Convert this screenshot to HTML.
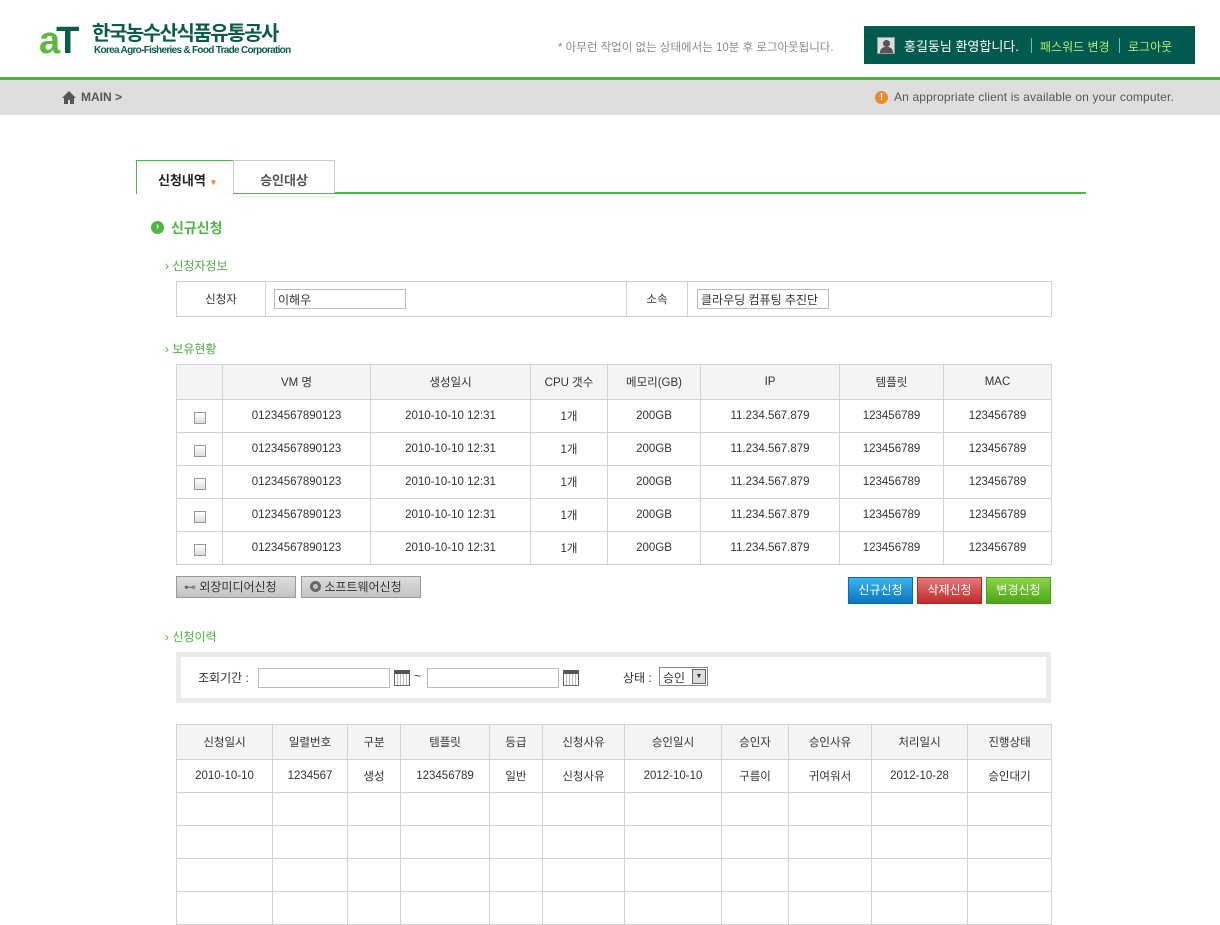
<!DOCTYPE html>
<html><head><meta charset="utf-8"><style>
*{margin:0;padding:0;box-sizing:border-box}
body{width:1220px;height:903px;overflow:hidden;background:#fff;font-family:"Liberation Sans","Noto Sans CJK KR","NanumGothic",sans-serif;font-size:12px;color:#333;position:relative}
.a{position:absolute}
table{border-collapse:collapse;table-layout:fixed;position:absolute}
td,th{border:1px solid #d2d2d2;text-align:center;font-weight:normal;font-size:11.5px;color:#333;padding:0}
th{background:#f4f4f4}
.cb{display:inline-block;width:12px;height:12px;border:1px solid #999;background:linear-gradient(#fff,#ddd);vertical-align:-6px}
.inp{position:absolute;border:1px solid #bbb;background:#fff;height:20px;font-size:12px;padding:1px 3px}
.sub{position:absolute;color:#4dae3f;font-size:12px}
.btn{position:absolute;height:27px;color:#fff;font-size:12px;text-align:center;line-height:25px}
.gb{position:absolute;height:22px;background:linear-gradient(#ddd,#c4c4c4);border:1px solid #999;font-size:12px;line-height:20px;color:#333}
.cal{position:absolute;width:16px;height:16px;border:1px solid #666;background:repeating-linear-gradient(90deg,#fff 0 2px,#bbb 2px 3px);border-top:4px solid #555}
</style></head><body>
<div class="a" style="left:39px;top:22px;font:bold 38px 'Liberation Sans',sans-serif;letter-spacing:-4px;line-height:38px"><span style="color:#5bb83f">a</span><span style="color:#0d5c4a">T</span></div>
<div class="a" style="left:92px;top:22px;font-weight:bold;font-size:20px;color:#0d5c4a;letter-spacing:-1.5px;line-height:24px">한국농수산식품유통공사</div>
<div class="a" style="left:94px;top:45px;font-weight:bold;font-size:10px;color:#0d5c4a;letter-spacing:-0.7px">Korea Agro-Fisheries &amp; Food Trade Corporation</div>
<div class="a" style="left:558px;top:39px;font-size:11.5px;color:#888">* 아무런 작업이 없는 상태에서는 10분 후 로그아웃됩니다.</div>
<div class="a" style="left:864px;top:26px;width:331px;height:38px;background:#02594e"></div>
<div class="a" style="left:877px;top:37px;width:18px;height:17px;background:#ddd;border:1px solid #999"><div class="a" style="left:5px;top:2px;width:7px;height:7px;border-radius:50%;background:#555"></div><div class="a" style="left:2px;top:9px;width:13px;height:6px;border-radius:5px 5px 0 0;background:#555"></div></div>
<div class="a" style="left:904px;top:36px;color:#fff;font-size:13px">홍길동님 환영합니다.</div>
<div class="a" style="left:1031px;top:38px;width:1px;height:15px;background:#6c9"></div>
<div class="a" style="left:1040px;top:38px;color:#aef07a;font-size:12px">패스워드 변경</div>
<div class="a" style="left:1119px;top:38px;width:1px;height:15px;background:#6c9"></div>
<div class="a" style="left:1128px;top:38px;color:#aef07a;font-size:12px">로그아웃</div>
<div class="a" style="left:0;top:77px;width:1220px;height:3px;background:#4cb843"></div>
<div class="a" style="left:0;top:80px;width:1220px;height:35px;background:#dedede"></div>
<svg class="a" style="left:62px;top:91px" width="14" height="13"><path d="M7 0L0 7h2v6h4V9h2v4h4V7h2z" fill="#555"/></svg>
<div class="a" style="left:81px;top:90px;font-weight:bold;font-size:12px;color:#555">MAIN &gt;</div>
<div class="a" style="left:875px;top:91px;width:13px;height:13px;border-radius:50%;background:#ef8a2a;color:#fff;font-size:10px;font-weight:bold;text-align:center;line-height:13px">!</div>
<div class="a" style="left:894px;top:90px;font-size:12px;color:#555;letter-spacing:0.15px">An appropriate client is available on your computer.</div>

<div class="a" style="left:136px;top:192px;width:950px;height:2px;background:#4cb843"></div>
<div class="a" style="left:136px;top:160px;width:98px;height:34px;border:1px solid #4cb843;border-bottom:none;background:#fff;font-weight:bold;font-size:13px;color:#222;padding:9px 0 0 21px">신청내역 <span style="color:#f07820;font-size:8px">▼</span></div>
<div class="a" style="left:233px;top:160px;width:102px;height:33px;border:1px solid #ccc;border-bottom:none;background:#fff;font-weight:bold;font-size:13px;color:#555;text-align:center;padding-top:9px">승인대상</div>

<div class="a" style="left:151px;top:221px;width:13px;height:13px;border-radius:50%;background:#4cb843;color:#fff;font-size:10px;text-align:center;line-height:12px;font-weight:bold">›</div>
<div class="a" style="left:171px;top:218px;font-weight:bold;font-size:14px;color:#4cb843">신규신청</div>

<div class="sub" style="left:165px;top:257px">› 신청자정보</div>
<table style="left:176px;top:281px;width:875px;height:36px"><colgroup><col width="89"><col width="361"><col width="61"><col width="364"></colgroup>
<tr><td>신청자</td><td></td><td>소속</td><td></td></tr></table>
<div class="inp" style="left:274px;top:289px;width:132px">이해우</div>
<div class="inp" style="left:697px;top:289px;width:132px">클라우딩 컴퓨팅 추진단</div>

<div class="sub" style="left:165px;top:340px">› 보유현황</div>
<table style="left:176px;top:364px;width:875px"><colgroup><col width="46"><col width="148"><col width="160"><col width="77"><col width="93"><col width="139"><col width="104"><col width="108"></colgroup>
<tr style="height:35px"><th></th><th>VM 명</th><th>생성일시</th><th>CPU 갯수</th><th>메모리(GB)</th><th>IP</th><th>템플릿</th><th>MAC</th></tr>
<tr style="height:33px"><td><span class="cb"></span></td><td>01234567890123</td><td>2010-10-10 12:31</td><td>1개</td><td>200GB</td><td>11.234.567.879</td><td>123456789</td><td>123456789</td></tr>
<tr style="height:33px"><td><span class="cb"></span></td><td>01234567890123</td><td>2010-10-10 12:31</td><td>1개</td><td>200GB</td><td>11.234.567.879</td><td>123456789</td><td>123456789</td></tr>
<tr style="height:33px"><td><span class="cb"></span></td><td>01234567890123</td><td>2010-10-10 12:31</td><td>1개</td><td>200GB</td><td>11.234.567.879</td><td>123456789</td><td>123456789</td></tr>
<tr style="height:33px"><td><span class="cb"></span></td><td>01234567890123</td><td>2010-10-10 12:31</td><td>1개</td><td>200GB</td><td>11.234.567.879</td><td>123456789</td><td>123456789</td></tr>
<tr style="height:33px"><td><span class="cb"></span></td><td>01234567890123</td><td>2010-10-10 12:31</td><td>1개</td><td>200GB</td><td>11.234.567.879</td><td>123456789</td><td>123456789</td></tr>
</table>

<div class="gb" style="left:176px;top:576px;width:120px;padding-left:7px"><span style="color:#666">⊷</span> 외장미디어신청</div>
<div class="gb" style="left:301px;top:576px;width:120px;padding-left:8px"><span style="display:inline-block;width:11px;height:11px;border-radius:50%;background:#666;border:3px solid #666;box-shadow:inset 0 0 0 2px #ccc;vertical-align:-1px"></span> 소프트웨어신청</div>
<div class="btn" style="left:848px;top:577px;width:65px;background:linear-gradient(#3bb4e8,#0a74c4);border:1px solid #0a6bb5">신규신청</div>
<div class="btn" style="left:917px;top:577px;width:65px;background:linear-gradient(#e07a7a,#c22a2a);border:1px solid #b22">삭제신청</div>
<div class="btn" style="left:986px;top:577px;width:65px;background:linear-gradient(#8bd44a,#4aa812);border:1px solid #4a9e1a">변경신청</div>

<div class="sub" style="left:165px;top:628px">› 신청이력</div>
<div class="a" style="left:176px;top:652px;width:875px;height:51px;border:5px solid #ebebeb"></div>
<div class="a" style="left:198px;top:669px;font-size:12px">조회기간 :</div>
<div class="inp" style="left:258px;top:668px;width:132px"></div>
<div class="cal" style="left:394px;top:670px"></div>
<div class="a" style="left:414px;top:669px">~</div>
<div class="inp" style="left:427px;top:668px;width:132px"></div>
<div class="cal" style="left:563px;top:670px"></div>
<div class="a" style="left:623px;top:669px">상태 :</div>
<div class="a" style="left:659px;top:667px;width:49px;height:19px;border:1px solid #888;background:#fff;padding:1px 3px">승인<span style="position:absolute;right:1px;top:1px;width:14px;height:15px;border:1px solid #666;background:#ddd;font-size:7px;text-align:center;line-height:14px">▼</span></div>

<table style="left:176px;top:724px;width:875px"><colgroup><col width="96"><col width="75"><col width="53"><col width="89"><col width="53"><col width="82"><col width="97"><col width="67"><col width="83"><col width="96"><col width="84"></colgroup>
<tr style="height:35px"><th>신청일시</th><th>일렬번호</th><th>구분</th><th>템플릿</th><th>등급</th><th>신청사유</th><th>승인일시</th><th>승인자</th><th>승인사유</th><th>처리일시</th><th>진행상태</th></tr>
<tr style="height:33px"><td>2010-10-10</td><td>1234567</td><td>생성</td><td>123456789</td><td>일반</td><td>신청사유</td><td>2012-10-10</td><td>구름이</td><td>귀여워서</td><td>2012-10-28</td><td>승인대기</td></tr>
<tr style="height:33px"><td></td><td></td><td></td><td></td><td></td><td></td><td></td><td></td><td></td><td></td><td></td></tr>
<tr style="height:33px"><td></td><td></td><td></td><td></td><td></td><td></td><td></td><td></td><td></td><td></td><td></td></tr>
<tr style="height:33px"><td></td><td></td><td></td><td></td><td></td><td></td><td></td><td></td><td></td><td></td><td></td></tr>
<tr style="height:33px"><td></td><td></td><td></td><td></td><td></td><td></td><td></td><td></td><td></td><td></td><td></td></tr>
</table>
</body></html>
